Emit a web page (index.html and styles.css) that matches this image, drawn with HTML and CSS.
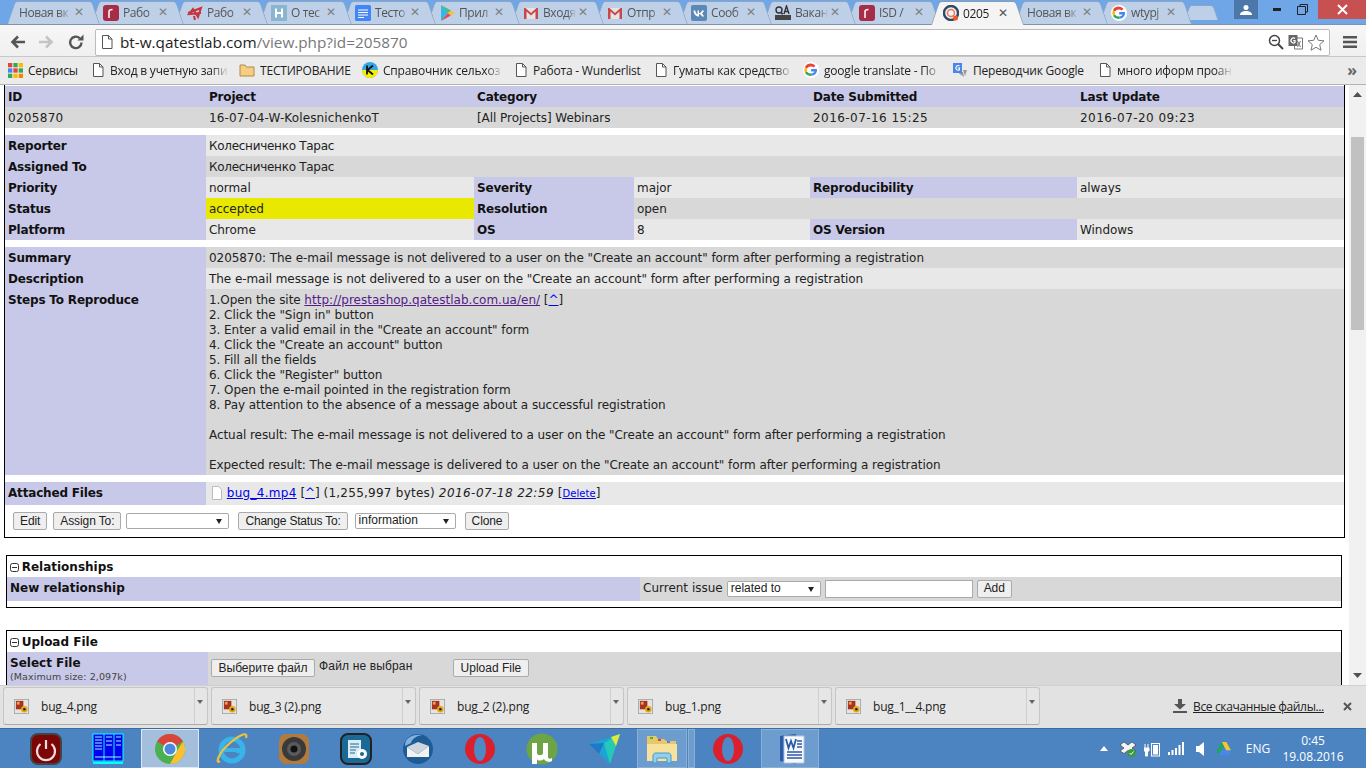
FILE: index.html
```html
<!DOCTYPE html>
<html lang="ru">
<head>
<meta charset="utf-8">
<title>0205870 - bug report</title>
<link rel="stylesheet" href="styles.css">
</head>
<body>
<svg class="defs" aria-hidden="true">
  <symbol id="i-red" viewBox="0 0 16 16"><path d="M1 8l13-5-3 9-5-8-4 5 12-1M7 11l1 4" fill="none" stroke="#c8333d" stroke-width="2"/></symbol>
  <symbol id="i-docs" viewBox="0 0 16 16"><rect width="16" height="16" rx="1.500" fill="#4285f4"/><path d="M3 5h10M3 7.500h10M3 10h10M3 12.500h6" stroke="#fff" stroke-width="1.200"/></symbol>
  <symbol id="i-play" viewBox="0 0 16 16"><path d="M2 0l7 8-7 8z" fill="#35b6e8"/><path d="M2 0l10 5.500L9 8z" fill="#48bb78"/><path d="M2 16l10-5.500L9 8z" fill="#e94b4b"/><path d="M12 5.500L16 8l-4 2.500L9 8z" fill="#f9c23c"/></symbol>
  <symbol id="i-gmail" viewBox="0 0 16 16"><path d="M1 3h14v11H1z" fill="#e4e4e4"/><path d="M1 14V3h1.500L8 8l5.500-5H15v11h-2.500V6.500L8 10.500 3.500 6.500V14z" fill="#c9474a"/></symbol>
  <symbol id="i-vk" viewBox="0 0 16 16"><rect width="16" height="16" rx="2" fill="#5b88b5"/><path d="M2.500 5.500c.3 3.500 2 6 5.500 6V9c1.500 0 2.500 1.500 3 2.500h2C12.500 10 11.500 9 11 8.500c.7-.6 1.600-1.800 2-3h-2c-.4 1-1.500 2.500-3 2.800V5.500H6.500v4c-1 -.4-2-2-2.200-4z" fill="#fff"/></symbol>
  <symbol id="i-qtl" viewBox="0 0 16 16"><circle cx="8" cy="8" r="7" fill="none" stroke="#2f4a68" stroke-width="2.400"/><circle cx="8" cy="8" r="3.500" fill="none" stroke="#e8785a" stroke-width="1.500"/><circle cx="12.500" cy="13" r="2.500" fill="#ee5a24"/></symbol>
  <symbol id="i-g" viewBox="0 0 16 16"><circle cx="8" cy="8" r="8" fill="#fff"/><path d="M8.200 7v2.500h3.300c-.4 1.100-1.600 2-3.300 2v2.300c3.600 0 5.800-2.500 5.800-5.700 0-.4 0-.8-.1-1.100z" fill="#4285f4"/><path d="M3.900 9.500A4.600 4.600 0 003.900 6.500L2 5a6.700 6.700 0 000 6z" fill="#fbbc05"/><path d="M8.200 4.400c1 0 1.900.4 2.500 1l1.700-1.700a6.200 6.200 0 00-10.400 1.300l2 1.600a4.500 4.500 0 014.200-2.200z" fill="#ea4335"/><path d="M8.200 11.500a4.500 4.500 0 01-4.300-2L2 11a6.300 6.300 0 006.200 2.800z" fill="#34a853"/></symbol>
  <symbol id="i-page" viewBox="0 0 16 16"><path d="M3.500 1.500h6l3.500 3.500v9.500h-9.500z" fill="#fff" stroke="#555"/><path d="M9.500 1.500V5H13" fill="none" stroke="#555"/></symbol>
  <symbol id="i-folder" viewBox="0 0 16 16"><path d="M1 3h5l1.500 2H15v9H1z" fill="#f5cd85" stroke="#b58a42"/></symbol>
  <symbol id="i-apps" viewBox="0 0 14 14"><path d="M0 0h4v4H0z" fill="#ea4335"/><path d="M5 0h4v4H5z" fill="#34a853"/><path d="M10 0h4v4h-4z" fill="#fbbc05"/><path d="M0 5h4v4H0z" fill="#4285f4"/><path d="M5 5h4v4H5z" fill="#ea4335"/><path d="M10 5h4v4h-4z" fill="#34a853"/><path d="M0 10h4v4H0z" fill="#34a853"/><path d="M5 10h4v4H5z" fill="#fbbc05"/><path d="M10 10h4v4h-4z" fill="#ea8a00"/></symbol>
  <symbol id="i-png" viewBox="0 0 16 16"><rect x=".5" y=".5" width="15" height="15" fill="#e4e4e0" stroke="#aaa"/><path d="M2 2h8v9H2z" fill="#a8321c"/><path d="M3 3h3v3H3z" fill="#e0a060"/><circle cx="11" cy="11" r="3.500" fill="#e8a317"/><circle cx="11" cy="11" r="1.300" fill="#222"/></symbol>
  <symbol id="t-power" viewBox="0 0 32 32"><rect x="1" y="1" width="30" height="30" rx="7" fill="#7c0606" stroke="#444" stroke-width="2"/><path d="M10.500 11a9 9 0 1011 0" fill="none" stroke="#f4dcdc" stroke-width="2.200"/><path d="M16 7v9" stroke="#f4dcdc" stroke-width="2.200"/></symbol>
  <symbol id="t-far" viewBox="0 0 32 32"><rect x="1" y="1" width="30" height="27" fill="#0000f0" stroke="#0ff"/><path d="M12 1v27M22 1v27" stroke="#0ff"/><path d="M3 4h7M3 7h7M3 10h7M3 13h7M3 16h7M14 4h6M14 8h6M14 12h6M24 4h5M24 8h5M24 12h5M3 24h26" stroke="#9ff" stroke-width="1"/><path d="M1 29h30v2H1z" fill="#0ff"/></symbol>
  <symbol id="t-chrome" viewBox="0 0 32 32"><circle cx="16" cy="16" r="15" fill="#4caf50"/><path d="M16 1a15 15 0 0113 7.500L16 16 3 8.500A15 15 0 0116 1z" fill="#d9453a"/><path d="M29 8.500A15 15 0 0116 31l7-13z" fill="#fbc02d"/><circle cx="16" cy="16" r="7" fill="#fff"/><circle cx="16" cy="16" r="5.500" fill="#4a89dc"/></symbol>
  <symbol id="t-ie" viewBox="0 0 32 32"><circle cx="16" cy="17" r="11" fill="none" stroke="#3ab4e8" stroke-width="5"/><path d="M6 17h21" stroke="#3ab4e8" stroke-width="4"/><path d="M28 19h-8" stroke="#3ab4e8" stroke-width="2"/><path d="M4 28C-1 32 2 20 14 10S32-1 30 5" fill="none" stroke="#eec23a" stroke-width="2.200"/></symbol>
  <symbol id="t-spk" viewBox="0 0 32 32"><rect x="1" y="1" width="30" height="30" rx="7" fill="#b27b3e"/><circle cx="16" cy="16" r="12" fill="#3a3a3a"/><circle cx="16" cy="16" r="7" fill="#5a5a5a"/><circle cx="16" cy="16" r="3.500" fill="#111"/></symbol>
  <symbol id="t-app" viewBox="0 0 32 32"><rect x="1" y="1" width="30" height="30" rx="7" fill="#1b6a95" stroke="#222" stroke-width="2"/><path d="M8 7h13v18H8z" fill="#dcecf5"/><path d="M10 11h9M10 14h9M10 17h6M10 20h5" stroke="#1b6a95"/><circle cx="22" cy="21" r="5" fill="#fff"/><circle cx="22" cy="21" r="2" fill="#1b6a95"/></symbol>
  <symbol id="t-tb" viewBox="0 0 32 32"><circle cx="16" cy="16" r="15" fill="#1e5c96"/><path d="M5 14l11 7 11-8v11H5z" fill="#f2f2f2"/><path d="M5 14l11-5 11 4-11 8z" fill="#cfd5de"/><path d="M3 13C3 5 10 1 20 2c-6 1-10 4-11 8z" fill="#7fb2de"/></symbol>
  <symbol id="t-opera" viewBox="0 0 32 32"><ellipse cx="16" cy="16" rx="15" ry="15" fill="#d9202c"/><ellipse cx="16" cy="16" rx="6" ry="12" fill="#4f88c7"/></symbol>
  <symbol id="t-ut" viewBox="0 0 32 32"><circle cx="16" cy="16" r="15.500" fill="#6da544"/><path d="M6 10h5v10c0 3 6 3 6 0V10h5v14c0 2 2 2 4 1v3c-4 2-7 0-8-2-3 2-6 2-7 0v5H6z" fill="#fff"/></symbol>
  <symbol id="t-prism" viewBox="0 0 32 32"><path d="M1 11L32 1 22 31z" fill="#1aa5d6"/><path d="M32 1L16 10l6 21z" fill="#27c8b8"/><path d="M32 1l-9 3 5 9z" fill="#e0e83a"/><path d="M1 11l15-1-5 11z" fill="#2278c4"/></symbol>
  <symbol id="t-folder" viewBox="0 0 32 32"><path d="M1 3h9l2 3h6l2 2h10v20H1z" fill="#e8c76a"/><path d="M1 11h30v17H1z" fill="#f7e19c"/><path d="M4 4h3v2H4z" fill="#3bb54a"/><path d="M12 6h3v2h-3z" fill="#d9453a"/><path d="M21 8h3v2h-3z" fill="#4a89dc"/><path d="M7 30v-7c0-2 1-3 3-3h12c2 0 3 1 3 3v7h-4v-5H11v5z" fill="#8ed1ee" stroke="#4a98c8"/></symbol>
  <symbol id="t-drive" viewBox="0 0 16 16"><path d="M5.500 1h5l5 9h-5z" fill="#f6c62f"/><path d="M5.500 1L0 10.500l2.500 4.500 5.300-9.500z" fill="#1fa463"/><path d="M2.500 15h10.500l2.500-5H5.200z" fill="#4688f1"/></symbol>
</svg>

<div class="app">
  <header class="browser">
    <div class="tabstrip">
      <div class="tabs">
        <div class="tab"><span class="tab-title">Новая вк</span><span class="tab-x">✕</span></div>
        <div class="tab"><svg class="fav" viewBox="0 0 16 16"><rect width="16" height="16" rx="3" fill="#a72c47"/><path d="M6 13V6.500c0-1 1-2 3.500-2" fill="none" stroke="#fff" stroke-width="1.500"/></svg><span class="tab-title">Рабо</span><span class="tab-x">✕</span></div>
        <div class="tab"><svg class="fav"><use href="#i-red"/></svg><span class="tab-title">Рабо</span><span class="tab-x">✕</span></div>
        <div class="tab"><svg class="fav" viewBox="0 0 16 16"><rect width="16" height="16" fill="#8ab5d0"/><path d="M5 3.500v9M11 3.500v9M5 8h6" fill="none" stroke="#fff" stroke-width="2"/></svg><span class="tab-title">О тес</span><span class="tab-x">✕</span></div>
        <div class="tab"><svg class="fav"><use href="#i-docs"/></svg><span class="tab-title">Тесто</span><span class="tab-x">✕</span></div>
        <div class="tab"><svg class="fav"><use href="#i-play"/></svg><span class="tab-title">Прил</span><span class="tab-x">✕</span></div>
        <div class="tab"><svg class="fav"><use href="#i-gmail"/></svg><span class="tab-title">Входя</span><span class="tab-x">✕</span></div>
        <div class="tab"><svg class="fav"><use href="#i-gmail"/></svg><span class="tab-title">Отпр</span><span class="tab-x">✕</span></div>
        <div class="tab"><svg class="fav"><use href="#i-vk"/></svg><span class="tab-title">Сооб</span><span class="tab-x">✕</span></div>
        <div class="tab"><svg class="fav" viewBox="0 0 16 16"><circle cx="4" cy="5" r="3" fill="none" stroke="#333" stroke-width="1.400"/><path d="M6 8l2 1M9 9l2.500-8L14 9M10 6.500h3" fill="none" stroke="#333" stroke-width="1.400"/><rect y="10" width="16" height="5" fill="#444"/></svg><span class="tab-title">Вакан</span><span class="tab-x">✕</span></div>
        <div class="tab"><svg class="fav" viewBox="0 0 16 16"><rect width="16" height="16" rx="3" fill="#a72c47"/><path d="M6 13V6.500c0-1 1-2 3.500-2" fill="none" stroke="#fff" stroke-width="1.500"/></svg><span class="tab-title">ISD /</span><span class="tab-x">✕</span></div>
        <div class="tab tab-active"><svg class="fav"><use href="#i-qtl"/></svg><span class="tab-title">0205</span><span class="tab-x">✕</span></div>
        <div class="tab"><span class="tab-title">Новая вк</span><span class="tab-x">✕</span></div>
        <div class="tab"><svg class="fav"><use href="#i-g"/></svg><span class="tab-title">wtypj</span><span class="tab-x">✕</span></div>
        <div class="tab tab-new"></div>
      </div>
      <div class="winctl">
        <div class="win-user"><svg width="12" height="10" viewBox="0 0 12 10"><circle cx="6" cy="2.500" r="2.500" fill="#fff"/><path d="M0 10c0-3 3-4 6-4s6 1 6 4z" fill="#fff"/></svg></div>
        <div class="win-btn win-min"><svg width="8" height="3" viewBox="0 0 8 3"><path d="M0 0h8v3H0z" fill="#222"/></svg></div>
        <div class="win-btn win-max"><svg width="11" height="11" viewBox="0 0 11 11"><path d="M3 2V.5h7.500V8H9M.5 2.500h8v8h-8z" fill="none" stroke="#222"/></svg></div>
        <div class="win-close"><svg width="11" height="11" viewBox="0 0 11 11"><path d="M1 1l9 9M10 1l-9 9" stroke="#fff" stroke-width="2"/></svg></div>
      </div>
    </div>

    <div class="toolbar">
      <svg class="nav nav-back" width="16" height="14" viewBox="0 0 16 14"><path d="M15 7H3M8 1.500L2.500 7 8 12.500" fill="none" stroke="#555" stroke-width="2.600"/></svg>
      <svg class="nav" width="16" height="14" viewBox="0 0 16 14"><path d="M1 7h12M8 1.500L13.500 7 8 12.500" fill="none" stroke="#c4c4c4" stroke-width="2.600"/></svg>
      <svg class="nav nav-reload" width="16" height="16" viewBox="0 0 16 16"><path d="M13.500 8.500a5.700 5.700 0 11-1.700-4.200" fill="none" stroke="#555" stroke-width="2.400"/><path d="M9.500 6.500H15.500V.5z" fill="#555"/></svg>
      <div class="omnibox">
        <svg class="omni-page" width="16" height="16"><use href="#i-page"/></svg>
        <div class="url"><span class="url-host">bt-w.qatestlab.com</span>/view.php?id=205870</div>
        <svg width="16" height="16" viewBox="0 0 16 16"><circle cx="6.500" cy="6.500" r="5" fill="none" stroke="#444" stroke-width="1.500"/><path d="M10 10l5 5" stroke="#444" stroke-width="2"/><path d="M4 6.500h5" stroke="#444" stroke-width="1.300"/></svg>
        <svg width="17" height="16" viewBox="0 0 16 16"><path d="M7 4h8v11H7z" fill="#fff" stroke="#777"/><path d="M10 7l3 6M13 7l-3 6" stroke="#777"/><path d="M1 1h9v11H1z" fill="#666"/><path d="M7.500 4.500a2.500 2.500 0 100 4V6.700H5.800" fill="none" stroke="#fff" stroke-width="1.200"/></svg>
        <svg width="18" height="17" viewBox="0 0 18 17"><path d="M9 1l2.300 5.300 5.700.5-4.300 3.800 1.300 5.600L9 13.300 4 16.200l1.300-5.600L1 6.800l5.700-.5z" fill="#fff" stroke="#777"/></svg>
      </div>
      <svg class="menu" width="14" height="12" viewBox="0 0 14 12"><path d="M0 0h14v2.600H0zM0 4.700h14v2.600H0zM0 9.400h14V12H0z" fill="#555"/></svg>
    </div>

    <nav class="bookmarks">
      <div class="bm"><svg class="bm-ico bm-apps" viewBox="0 0 14 14"><use href="#i-apps"/></svg><span class="bm-text">Сервисы</span></div>
      <div class="bm bm-p"><svg class="bm-ico"><use href="#i-page"/></svg><span class="bm-text bm-fade">Вход в учетную запи</span></div>
      <div class="bm"><svg class="bm-ico"><use href="#i-folder"/></svg><span class="bm-text">ТЕСТИРОВАНИЕ</span></div>
      <div class="bm"><svg class="bm-ico" viewBox="0 0 16 16"><circle cx="8" cy="8" r="8" fill="#35a7e8"/><path d="M0 8h16a8 8 0 01-16 0z" fill="#f7ee00"/><path d="M5 3.500v9M11 3.500L5.500 8l5.500 4.500" fill="none" stroke="#111" stroke-width="1.800"/></svg><span class="bm-text bm-fade">Справочник сельхоз</span></div>
      <div class="bm bm-p"><svg class="bm-ico"><use href="#i-page"/></svg><span class="bm-text">Работа - Wunderlist</span></div>
      <div class="bm bm-p"><svg class="bm-ico"><use href="#i-page"/></svg><span class="bm-text bm-fade">Гуматы как средство</span></div>
      <div class="bm"><svg class="bm-ico"><use href="#i-g"/></svg><span class="bm-text bm-fade">google translate - По</span></div>
      <div class="bm"><svg class="bm-ico" viewBox="0 0 16 16"><path d="M5 10h6l1 5z" fill="#9a9a9a"/><path d="M1 1h9v10H1z" fill="#4a86e8"/><path d="M7.500 4a2.300 2.300 0 100 3.700V6H5.800" fill="none" stroke="#fff" stroke-width="1.100"/><path d="M11 8l2 6 2-6z" fill="#9a9a9a"/></svg><span class="bm-text">Переводчик Google</span></div>
      <div class="bm bm-p"><svg class="bm-ico"><use href="#i-page"/></svg><span class="bm-text bm-fade">много иформ проан</span></div>
      <div class="bm-more">»</div>
    </nav>
  </header>

  <main class="viewport">
    <div class="page">
      <div class="issue">
        <table class="grid">
          <colgroup><col class="c1"><col class="c2"><col class="c3"><col class="c4"><col class="c5"><col class="c6"></colgroup>
          <tr class="lav"><th>ID</th><th>Project</th><th colspan="2">Category</th><th>Date Submitted</th><th>Last Update</th></tr>
          <tr class="dark"><td class="num-s">0205870</td><td class="proj">16-07-04-W-KolesnichenkoT</td><td colspan="2">[All Projects] Webinars</td><td class="num">2016-07-16 15:25</td><td class="num">2016-07-20 09:23</td></tr>
          <tr class="gap"><td colspan="6"></td></tr>
          <tr class="light"><th>Reporter</th><td colspan="5" class="ru">Колесниченко Тарас</td></tr>
          <tr class="dark"><th>Assigned To</th><td colspan="5" class="ru">Колесниченко Тарас</td></tr>
          <tr class="light"><th>Priority</th><td>normal</td><th>Severity</th><td>major</td><th>Reproducibility</th><td>always</td></tr>
          <tr class="dark"><th>Status</th><td class="st-accepted">accepted</td><th>Resolution</th><td colspan="3">open</td></tr>
          <tr class="light"><th>Platform</th><td>Chrome</td><th>OS</th><td>8</td><th>OS Version</th><td>Windows</td></tr>
          <tr class="gap"><td colspan="6"></td></tr>
          <tr class="dark"><th>Summary</th><td colspan="5">0205870: The e-mail message is not delivered to a user on the "Create an account" form after performing a registration</td></tr>
          <tr class="light"><th>Description</th><td colspan="5">The e-mail message is not delivered to a user on the "Create an account" form after performing a registration</td></tr>
          <tr class="dark"><th>Steps To Reproduce</th><td colspan="5">1.Open the site <a class="visited" href="#">http://prestashop.qatestlab.com.ua/en/</a> [<a class="link" href="#">^</a>]<br>2. Click the "Sign in" button<br>3. Enter a valid email in the "Create an account" form<br>4. Click the "Create an account" button<br>5. Fill all the fields<br>6. Click the "Register" button<br>7. Open the e-mail pointed in the registration form<br>8. Pay attention to the absence of a message about a successful registration<br><br>Actual result: The e-mail message is not delivered to a user on the "Create an account" form after performing a registration<br><br>Expected result: The e-mail message is delivered to a user on the "Create an account" form after performing a registration</td></tr>
          <tr class="gap"><td colspan="6"></td></tr>
          <tr class="light attach"><th>Attached Files</th><td colspan="5"><svg class="file-ico" width="12" height="14" viewBox="0 0 12 14"><path d="M1.500.5h6l3 3v10h-9z" fill="#fff" stroke="#bbb"/></svg> <a class="link file-link" href="#">bug_4.mp4</a> [<a class="link" href="#">^</a>] <span class="bytes">(1,255,997 bytes)</span> <em class="num">2016-07-18 22:59</em> [<a class="link small" href="#">Delete</a>]</td></tr>
        </table>
        <div class="actions">
          <button class="btn" type="button">Edit</button>
          <button class="btn btn-assign" type="button">Assign To:</button>
          <span class="sel sel-assign"></span>
          <button class="btn btn-gap btn-status" type="button">Change Status To:</button>
          <span class="sel sel-status">information</span>
          <button class="btn btn-gap" type="button">Clone</button>
        </div>
      </div>

      <section class="box box-rel">
        <h3 class="box-title"><svg class="toggle" width="9" height="9" viewBox="0 0 9 9"><rect x=".5" y=".5" width="8" height="8" rx="2" fill="none" stroke="#333"/><path d="M2 4.500h5" stroke="#333"/></svg> Relationships</h3>
        <div class="rel-row">
          <div class="rel-label">New relationship</div>
          <div class="rel-form">
            <span>Current issue</span>
            <span class="sel sel-rel">related to</span>
            <input class="text-input" type="text" aria-label="Issue id">
            <button class="btn" type="button">Add</button>
          </div>
        </div>
      </section>

      <section class="box box-upload">
        <h3 class="box-title"><svg class="toggle" width="9" height="9" viewBox="0 0 9 9"><rect x=".5" y=".5" width="8" height="8" rx="2" fill="none" stroke="#333"/><path d="M2 4.500h5" stroke="#333"/></svg> Upload File</h3>
        <div class="up-row">
          <div class="up-label">Select File<small class="up-max">(Maximum size: 2,097k)</small></div>
          <div class="up-form">
            <button class="btn btn-file" type="button">Выберите файл</button>
            <span class="up-none">Файл не выбран</span>
            <button class="btn btn-file" type="button">Upload File</button>
          </div>
        </div>
      </section>
    </div>
    <aside class="scrollbar">
      <svg class="sb-arrow" width="9" height="5" viewBox="0 0 9 5"><path d="M4.500 0L9 5H0z" fill="#505050"/></svg>
      <div class="sb-thumb"></div>
      <svg class="sb-arrow sb-down" width="9" height="5" viewBox="0 0 9 5"><path d="M0 0h9L4.500 5z" fill="#505050"/></svg>
    </aside>
  </main>

  <section class="downloads">
    <div class="dl"><svg class="dl-ico"><use href="#i-png"/></svg><span class="dl-name">bug_4.png</span><span class="dl-drop"></span></div>
    <div class="dl"><svg class="dl-ico"><use href="#i-png"/></svg><span class="dl-name">bug_3 (2).png</span><span class="dl-drop"></span></div>
    <div class="dl"><svg class="dl-ico"><use href="#i-png"/></svg><span class="dl-name">bug_2 (2).png</span><span class="dl-drop"></span></div>
    <div class="dl"><svg class="dl-ico"><use href="#i-png"/></svg><span class="dl-name">bug_1.png</span><span class="dl-drop"></span></div>
    <div class="dl"><svg class="dl-ico"><use href="#i-png"/></svg><span class="dl-name">bug_1__4.png</span><span class="dl-drop"></span></div>
    <div class="dl-all">
      <svg width="14" height="14" viewBox="0 0 14 14"><path d="M5 0h4v5h4L7 10.500 1 5h4zM0 12h14v2H0z" fill="#555"/></svg>
      <a class="dl-link" href="#">Все скачанные файлы...</a>
    </div>
    <svg class="dl-close" width="9" height="9" viewBox="0 0 9 9"><path d="M1 1l7 7M8 1L1 8" stroke="#555" stroke-width="2"/></svg>
  </section>

  <footer class="taskbar">
    <div class="task"><svg class="t-ico"><use href="#t-power"/></svg></div>
    <div class="task"><svg class="t-ico"><use href="#t-far"/></svg></div>
    <div class="task task-on"><svg class="t-ico"><use href="#t-chrome"/></svg></div>
    <div class="task"><svg class="t-ico"><use href="#t-ie"/></svg></div>
    <div class="task"><svg class="t-ico"><use href="#t-spk"/></svg></div>
    <div class="task"><svg class="t-ico"><use href="#t-app"/></svg></div>
    <div class="task"><svg class="t-ico"><use href="#t-tb"/></svg></div>
    <div class="task"><svg class="t-ico"><use href="#t-opera"/></svg></div>
    <div class="task"><svg class="t-ico"><use href="#t-ut"/></svg></div>
    <div class="task"><svg class="t-ico"><use href="#t-prism"/></svg></div>
    <div class="task-group"><svg class="t-ico"><use href="#t-folder"/></svg></div><div class="task-stack"></div>
    <div class="task"><svg class="t-ico"><use href="#t-opera"/></svg></div>
    <div class="task task-word"><svg class="t-ico" viewBox="0 0 32 32"><path d="M6 3l16-2v30L6 28z" fill="#2a5aa8"/><path d="M10 3h20v27H10z" fill="#f7f9fc" stroke="#b8c4d8"/><path d="M12 6l2.500 9 2.500-7 2.500 7L22 6" fill="none" stroke="#2a5aa8" stroke-width="1.800"/><path d="M13 19h15M13 22h15M13 25h15M23 8h5M23 11h5M23 14h5" stroke="#2a5aa8" stroke-width="1.300"/></svg></div>
    <div class="tray">
      <div class="tr"><svg width="8" height="5" viewBox="0 0 8 5"><path d="M4 0l4 5H0z" fill="#fff"/></svg></div>
      <div class="tr"><svg width="16" height="16" viewBox="0 0 16 16"><path d="M4 1l4 3 4-3 4 3-4 3 4 3-4 2.500-4-3-4 3-4-2.500 4-3-4-3z" fill="#f4f4f4" stroke="#333" stroke-width=".6"/><circle cx="11.500" cy="12" r="4" fill="#3a9a3a"/><path d="M9.500 12l1.500 1.500 2.500-3" fill="none" stroke="#fff"/></svg></div>
      <div class="tr"><svg width="16" height="16" viewBox="0 0 16 16"><path d="M1 3v4M4 3v4M0 7h5v3H3.500v5h-2v-5H0z" fill="#fff" stroke="#fff"/><rect x="7.500" y="2.500" width="8" height="12.500" fill="none" stroke="#fff"/><rect x="9" y="4" width="5" height="9.500" fill="#fff"/></svg></div>
      <div class="tr"><svg width="16" height="13" viewBox="0 0 16 13"><path d="M0 10h2v3H0zM3.500 8h2v5h-2zM7 6h2v7H7zM10.500 3h2v10h-2zM14 0h2v13h-2z" fill="#fff"/></svg></div>
      <div class="tr"><svg width="9" height="14" viewBox="0 0 9 14"><path d="M0 4h3l5-4v14l-5-4H0z" fill="#fff"/></svg></div>
      <div class="tr"><svg width="16" height="15" viewBox="0 0 16 16"><use href="#t-drive"/></svg></div>
      <div class="tray-lang">ENG</div>
      <div class="clock"><span>0:45</span><span>19.08.2016</span></div>
    </div>
  </footer>
</div>
</body>
</html>
```
FILE: styles.css
```css
* { box-sizing: border-box; }
html, body { margin: 0; padding: 0; height: 100%; overflow: hidden; }
body { font-family: "DejaVu Sans", Verdana, sans-serif; font-size: 12px; line-height: 15px; color: #222; background: #fff; }
.defs { position: absolute; width: 0; height: 0; overflow: hidden; }
.app { width: 1366px; height: 768px; display: flex; flex-direction: column; }

/* browser chrome */
.browser { flex: none; font-family: "Open Sans", "Noto Sans", sans-serif; }
.tabstrip { height: 25px; background: #6ea6e8; display: flex; border-bottom: 1px solid #7f93ad; }
.tabs { display: flex; padding: 1px 0 0 7px; height: 24px; flex: 1; }
.tab { position: relative; width: 93px; margin-right: -9px; height: 23px; display: flex; align-items: center; padding: 0 14px 0 12px; font-size: 12px; color: #555; }
.tab::before, .tab::after { content: ""; position: absolute; top: 0; bottom: 0; width: 60%; background: #bdd0e8; border-top: 1px solid #8ea5c2; z-index: -1; }
.tab::before { left: 4px; transform: skewX(-19deg); border-left: 1px solid #8ea5c2; border-top-left-radius: 3px; }
.tab::after { right: 4px; transform: skewX(19deg); border-right: 1px solid #8ea5c2; border-top-right-radius: 3px; }
.tab:nth-child(1) { z-index: 15; } .tab:nth-child(2) { z-index: 14; } .tab:nth-child(3) { z-index: 13; }
.tab:nth-child(4) { z-index: 12; } .tab:nth-child(5) { z-index: 11; } .tab:nth-child(6) { z-index: 10; }
.tab:nth-child(7) { z-index: 9; } .tab:nth-child(8) { z-index: 8; } .tab:nth-child(9) { z-index: 7; }
.tab:nth-child(10) { z-index: 6; } .tab:nth-child(11) { z-index: 5; } .tab:nth-child(13) { z-index: 3; }
.tab:nth-child(14) { z-index: 2; } .tab:nth-child(15) { z-index: 1; }
.tab-active { z-index: 20; height: 24px; color: #222; }
.tab-active::before, .tab-active::after { background: #f4f4f4; border-color: #8a9bb0; }
.tab-new { width: 37px; height: 15px; margin: 4px 0 0; padding: 0; }
.fav { flex: none; width: 16px; height: 16px; margin-right: 4px; }
.tab-title { flex: 1; min-width: 0; overflow: hidden; white-space: nowrap; letter-spacing: -.4px; -webkit-mask-image: linear-gradient(to right, #000 75%, transparent 100%); mask-image: linear-gradient(to right, #000 75%, transparent 100%); }
.tab-x { flex: none; width: 14px; text-align: center; font-size: 12px; font-weight: 700; color: #808080; font-family: "DejaVu Sans", sans-serif; }
.tab-active .tab-x { color: #555; }
.winctl { display: flex; align-items: flex-start; flex: none; }
.win-user { width: 24px; height: 19px; margin-right: 6px; background: #4d77a8; display: flex; align-items: center; justify-content: center; }
.win-btn { height: 19px; display: flex; align-items: center; justify-content: center; }
.win-min { width: 26px; }
.win-max { width: 24px; margin-right: 4px; }
.win-close { width: 48px; height: 19px; background: #c75050; display: flex; align-items: center; justify-content: center; }

.toolbar { height: 31px; background: linear-gradient(#f6f6f6, #f0f0f0); display: flex; align-items: center; padding: 3px 0 0 10px; }
.nav { flex: none; margin-right: 14px; }
.nav-back { margin-right: 12px; }
.nav-reload { margin-right: 11px; }
.omnibox { flex: none; width: 1235px; height: 27px; background: #fff; border: 1px solid #bcbcbc; border-radius: 2px; display: flex; align-items: center; gap: 3px; padding: 0 4px 0 3px; }
.omni-page { flex: none; }
.url { flex: 1; font-size: 15.3px; margin-left: 2px; color: #777; white-space: nowrap; }
.url-host { color: #222; }
.menu { margin-left: 13px; }
.bookmarks { height: 29px; background: #ebebeb; border-top: 1px solid #c8c8c8; border-bottom: 1px solid #b4b4b4; padding: 0 0 1px 8px; display: grid; grid-template-columns: 83px 148px 123px 152px 140px 149px 149px 146px 145px 1fr; align-items: center; font-size: 12px; letter-spacing: -.2px; color: #222; }
.bm { display: flex; align-items: center; gap: 5px; min-width: 0; padding-right: 10px; }
.bm-ico { flex: none; width: 16px; height: 16px; }
.bm-apps { width: 15px; height: 15px; }
.bm-p { margin-left: -1px; gap: 4px; }
.bm-text { flex: 1; min-width: 0; white-space: nowrap; overflow: hidden; }
.bm-fade { -webkit-mask-image: linear-gradient(to right, #000 85%, transparent 100%); mask-image: linear-gradient(to right, #000 85%, transparent 100%); }
.bm-more { font-size: 16px; font-weight: 700; color: #666; text-align: right; padding-right: 9px; }

/* page viewport */
.viewport { flex: 1; min-height: 0; display: flex; overflow: hidden; background: #fff; }
.page { width: 1349px; flex: none; padding-left: 4px; overflow: hidden; }
.issue { width: 1341px; border: 1px solid #000; border-top: 0; padding-top: 1px; }
.grid { width: 1339px; table-layout: fixed; border-collapse: collapse; border-spacing: 0; }
.c1 { width: 201px; } .c2 { width: 268px; } .c3 { width: 160px; } .c4 { width: 176px; } .c5 { width: 267px; } .c6 { width: 267px; }
.grid th, .grid td { padding: 4px 3px 2px; text-align: left; vertical-align: top; font-size: 12px; line-height: 15px; }
.grid td { letter-spacing: -.06px; }
.grid th { background: #c8c8e8; color: #111; font-weight: 700; letter-spacing: -.18px; }
.grid .num { letter-spacing: .44px; }
.grid .num-s { letter-spacing: .3px; }
.grid .proj { letter-spacing: .12px; }
.grid .ru { letter-spacing: -.28px; }
.bytes { letter-spacing: .25px; }
.dark td { background: #d8d8d8; }
.light td { background: #e8e8e8; }
.grid .st-accepted { background: #e8e800; }
.grid .gap td { height: 7px; padding: 0; background: #fff; }
.grid .attach th, .grid .attach td { padding-top: 4px; padding-bottom: 4px; }
.file-ico { vertical-align: top; margin: 0 0 0 2px; }
.link { color: #0000ee; }
.file-link { letter-spacing: .3px; }
.visited { color: #551a8b; letter-spacing: .02px; }
.small { font-size: 10px; line-height: 1; letter-spacing: .1px; }
.actions { height: 32px; display: flex; align-items: center; padding: 0 0 0 8px; font-size: 12px; }
.btn { flex: none; font-family: "Liberation Sans", Arial, sans-serif; font-size: 12px; line-height: 15px; height: 18px; padding: 0 6px; letter-spacing: -.1px; background: #efefef; border: 1px solid #aaa; border-radius: 2px; color: #222; }
.btn-file { padding: 0 6.5px; letter-spacing: 0; }
.btn-gap { margin-left: 9px; }
.btn-assign { margin-left: 6px; }
.btn-status { letter-spacing: -.2px; }
.sel { position: relative; flex: none; display: block; height: 16px; background: #fff; border: 1px solid #aaa; border-radius: 2px; font-family: "Liberation Sans", Arial, sans-serif; font-size: 12px; line-height: 13px; padding-left: 3px; color: #222; }
.sel::after { content: ""; position: absolute; right: 6px; top: 5px; border-left: 3px solid transparent; border-right: 3px solid transparent; border-top: 5px solid #222; }
.sel-assign { width: 103px; margin-left: 5px; }
.sel-status { width: 101px; margin-left: 7px; }
.box { margin-top: 17px; margin-left: 2px; width: 1336px; border: 1px solid #000; }
.box-title { margin: 0; height: 21px; padding: 4px 0 0 3px; font-size: 12px; line-height: 15px; font-weight: 700; color: #111; }
.toggle { vertical-align: -1px; margin-right: -1.5px; }
.box-upload { margin-top: 22px; }
.rel-row { display: flex; height: 24px; margin-bottom: 6px; background: #d8d8d8; }
.rel-label { width: 633px; flex: none; background: #c8c8e8; padding: 4px 3px 0; font-size: 12px; font-weight: 700; color: #111; }
.rel-form { display: flex; align-items: center; padding: 0 0 1px 3px; gap: 4px; font-size: 12px; }
.sel-rel { width: 94px; }
.text-input { width: 148px; height: 18px; border: 1px solid #aaa; background: #fff; padding: 0; }
.up-row { display: flex; height: 60px; background: #d8d8d8; }
.up-label { width: 201px; flex: none; background: #c8c8e8; padding: 4px 3px 0; font-size: 12px; font-weight: 700; color: #111; }
.up-max { display: block; font-size: 9.5px; line-height: 11px; letter-spacing: .1px; font-weight: 400; color: #444; }
.up-form { display: flex; align-items: flex-start; padding: 7px 0 0 3px; font-family: "Liberation Sans", Arial, sans-serif; font-size: 12px; }
.up-none { width: 138px; padding-left: 4px; letter-spacing: .15px; }
.scrollbar { flex: 1; background: #f1f1f1; display: flex; flex-direction: column; align-items: center; padding-top: 7px; }
.sb-thumb { width: 13px; height: 193px; margin-top: 40px; background: #c1c1c1; }
.sb-down { margin-top: auto; margin-bottom: 7px; }

/* download bar */
.downloads { flex: none; height: 43px; background: #e2e2e2; border-top: 1px solid #d0d0d0; display: flex; align-items: center; gap: 3px; padding: 0 0 2px 3px; font-family: "Open Sans", "Noto Sans", sans-serif; font-size: 12px; letter-spacing: -.2px; color: #222; }
.dl { width: 205px; height: 38px; flex: none; background: #e6e6e6; border: 1px solid #c6c6c6; border-bottom-color: #aaa; border-radius: 3px; display: flex; align-items: center; padding-left: 10px; }
.dl-ico { flex: none; width: 15px; height: 15px; margin-right: 12px; }
.dl-name { flex: 1; white-space: nowrap; }
.dl-drop { position: relative; flex: none; width: 13px; height: 36px; border-left: 1px solid #cfcfcf; }
.dl-drop::after { content: ""; position: absolute; left: 2px; top: 12px; border-left: 3px solid transparent; border-right: 3px solid transparent; border-top: 4px solid #666; }
.dl-all { margin-left: 130px; display: flex; align-items: center; gap: 6px; }
.dl-link { color: #222; text-decoration: underline; white-space: nowrap; letter-spacing: -.35px; }
.dl-close { margin-left: auto; margin-right: 14px; }

/* taskbar */
.taskbar { flex: none; height: 40px; background: #4c84c2; display: flex; padding-left: 15px; border-top: 1px solid #3d6c9e; }
.task { flex: none; width: 62px; display: flex; align-items: center; justify-content: center; }
.t-ico { width: 32px; height: 32px; }
.task-on { width: 58px; margin: 0 2px; background: #a3bfdc; border: 1px solid #dde8f2; }
.task-group { flex: none; width: 50px; margin-left: 2px; display: flex; align-items: center; justify-content: center; background: #6d9ccf; border: 1px solid #8ab0d8; }
.task-stack { flex: none; width: 7px; margin-left: 1px; margin-right: 2px; background: #6d9ccf; border: 1px solid #8ab0d8; }
.task-word { width: 58px; margin-left: 2px; background: #6d9ccf; border: 1px solid #8ab0d8; }
.tray { margin-left: auto; margin-right: 20px; display: flex; align-items: center; color: #fff; font-family: "Open Sans", "Noto Sans", sans-serif; font-size: 12px; }
.tr { width: 24px; display: flex; justify-content: center; }
.tray-lang { width: 41px; padding-left: 3px; text-align: center; }
.clock { width: 66px; margin-left: 3px; display: flex; flex-direction: column; align-items: center; line-height: 16px; }
```
